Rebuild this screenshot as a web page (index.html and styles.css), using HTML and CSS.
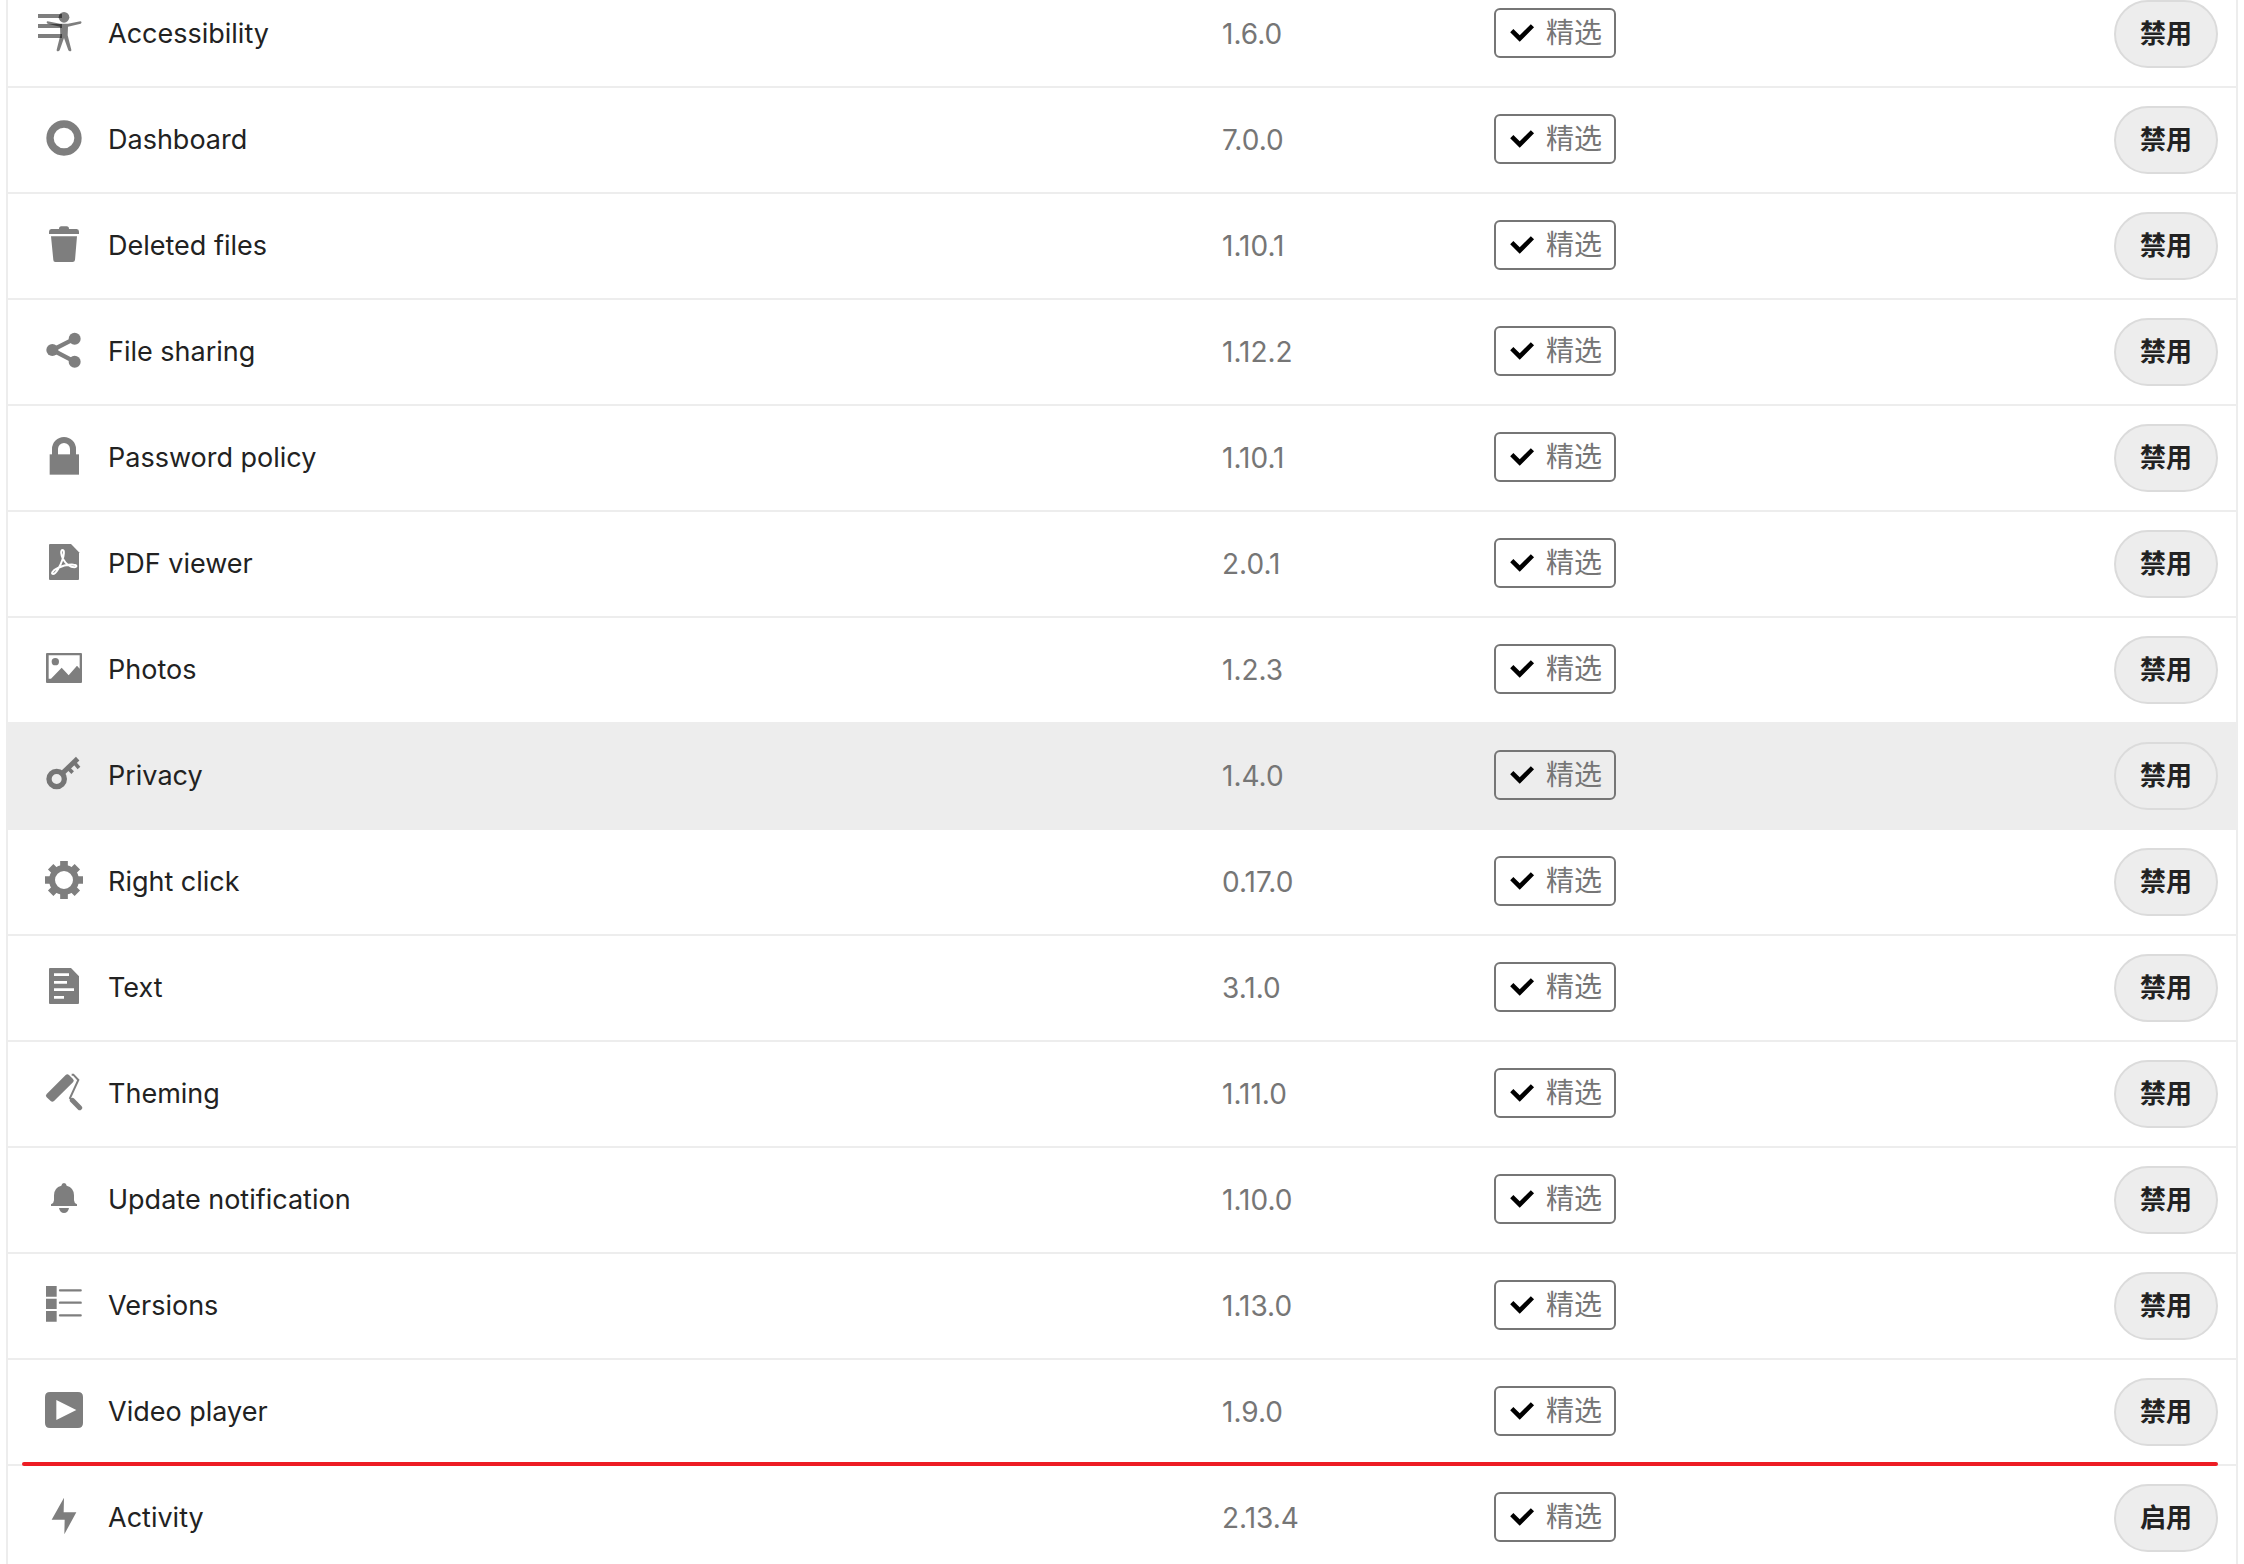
FILE: index.html
```html
<!DOCTYPE html>
<html lang="zh-CN">
<head>
  <meta charset="UTF-8">
  <meta name="viewport" content="width=device-width, initial-scale=1.0">
  <title>应用</title>
  <link rel="stylesheet" href="styles.css">
</head>
<body>
  <svg class="sprite" aria-hidden="true">
    <symbol id="check" viewBox="0 0 16 16">
      <path d="M11.924 4.066l-4.932 4.97-2.828-2.83L2.75 7.618l4.242 4.243 6.365-6.365z"/>
    </symbol>
  </svg>

  <button class="nav-toggle" type="button" aria-label="菜单">
    <svg viewBox="0 0 24 24"><path d="M0 0h24v4H0zM0 10h24v4H0zM0 20h24v4H0z"/></svg>
  </button>

  <main class="app-list">
    <table class="apps">
      <colgroup>
        <col class="col-icon">
        <col class="col-name">
        <col class="col-version">
        <col class="col-level">
        <col class="col-actions">
      </colgroup>
      <tbody>
        <tr>
          <td class="app-icon">
            <svg viewBox="0 0 120 120">
              <circle cx="60" cy="16" r="16"/>
              <path d="M11 28C7 28 7 34 11 35L48 44L49 70L38 113C37 118 44 120 47 115L60 78L73 115C76 120 83 118 82 113L71 70L72 44L110 35C114 34 113 28 109 28L72 35H48Z"/>
            </svg>
          </td>
          <td class="app-name">Accessibility</td>
          <td class="app-version">1.6.0</td>
          <td><span class="badge"><svg><use href="#check"/></svg>精选</span></td>
          <td class="actions"><button type="button">禁用</button></td>
        </tr>
        <tr>
          <td class="app-icon">
            <svg viewBox="0 0 120 120"><circle class="line" cx="60" cy="60" r="42" stroke-width="22"/></svg>
          </td>
          <td class="app-name">Dashboard</td>
          <td class="app-version">7.0.0</td>
          <td><span class="badge"><svg><use href="#check"/></svg>精选</span></td>
          <td class="actions"><button type="button">禁用</button></td>
        </tr>
        <tr>
          <td class="app-icon">
            <svg viewBox="0 0 120 120">
              <path d="M45 15Q45 7 52 7H68Q75 7 75 15H98Q105 16 105 23V30H15V23Q15 16 22 15Z"/>
              <path d="M21 37H99L93 108Q92 114 86 114H34Q28 114 28 108Z"/>
            </svg>
          </td>
          <td class="app-name">Deleted files</td>
          <td class="app-version">1.10.1</td>
          <td><span class="badge"><svg><use href="#check"/></svg>精选</span></td>
          <td class="actions"><button type="button">禁用</button></td>
        </tr>
        <tr>
          <td class="app-icon">
            <svg viewBox="0 0 120 120">
              <circle cx="25" cy="60" r="18"/>
              <circle cx="92" cy="26" r="18"/>
              <circle cx="92" cy="95" r="18"/>
              <path class="line" d="M92 26L25 60L92 95" stroke-width="13"/>
            </svg>
          </td>
          <td class="app-name">File sharing</td>
          <td class="app-version">1.12.2</td>
          <td><span class="badge"><svg><use href="#check"/></svg>精选</span></td>
          <td class="actions"><button type="button">禁用</button></td>
        </tr>
        <tr>
          <td class="app-icon">
            <svg viewBox="0 0 120 120">
              <path d="M17 55H105V116H17Z"/>
              <path class="line" d="M33 58V39A27 27 0 0 1 87 39V58" stroke-width="18"/>
            </svg>
          </td>
          <td class="app-name">Password policy</td>
          <td class="app-version">1.10.1</td>
          <td><span class="badge"><svg><use href="#check"/></svg>精选</span></td>
          <td class="actions"><button type="button">禁用</button></td>
        </tr>
        <tr>
          <td class="app-icon">
            <svg viewBox="0 0 120 120">
              <path d="M18 6H81L105 31V111Q105 114 102 114H18Q15 114 15 111V9Q15 6 18 6Z"/>
              <path class="cutout-line" d="M56 24C49 24 51 38 57 51C65 65 79 76 91 76C100 75 99 68 89 68C73 67 53 72 39 79C26 85 20 96 27 96C36 96 49 72 55 54C60 40 62 24 56 24Z"/>
            </svg>
          </td>
          <td class="app-name">PDF viewer</td>
          <td class="app-version">2.0.1</td>
          <td><span class="badge"><svg><use href="#check"/></svg>精选</span></td>
          <td class="actions"><button type="button">禁用</button></td>
        </tr>
        <tr>
          <td class="app-icon">
            <svg viewBox="0 0 120 120">
              <path fill-rule="evenodd" d="M9 15H111Q114 15 114 18V102Q114 105 111 105H9Q6 105 6 102V18Q6 15 9 15ZM14 22V92H21L53 59L74 82L99 53L107 62V22Z"/>
              <circle cx="34" cy="41" r="11"/>
            </svg>
          </td>
          <td class="app-name">Photos</td>
          <td class="app-version">1.2.3</td>
          <td><span class="badge"><svg><use href="#check"/></svg>精选</span></td>
          <td class="actions"><button type="button">禁用</button></td>
        </tr>
        <tr class="active">
          <td class="app-icon">
            <svg viewBox="0 0 120 120">
              <circle class="line" cx="38" cy="75" r="23" stroke-width="16"/>
              <path class="line" d="M54 59L101 14" stroke-width="15"/>
              <path class="line" d="M91 26L105 42M72 42L86 56" stroke-width="11"/>
            </svg>
          </td>
          <td class="app-name">Privacy</td>
          <td class="app-version">1.4.0</td>
          <td><span class="badge"><svg><use href="#check"/></svg>精选</span></td>
          <td class="actions"><button type="button">禁用</button></td>
        </tr>
        <tr>
          <td class="app-icon">
            <svg viewBox="0 0 120 120">
              <circle class="line" cx="60" cy="60" r="36" stroke-width="18"/>
              <path class="line" d="M60 3V24M60 96V117M3 60H24M96 60H117M20 20L35 35M85 85L100 100M20 100L35 85M85 35L100 20" stroke-width="23"/>
            </svg>
          </td>
          <td class="app-name">Right click</td>
          <td class="app-version">0.17.0</td>
          <td><span class="badge"><svg><use href="#check"/></svg>精选</span></td>
          <td class="actions"><button type="button">禁用</button></td>
        </tr>
        <tr>
          <td class="app-icon">
            <svg viewBox="0 0 120 120">
              <path fill-rule="evenodd" d="M18 6H81L105 31V111Q105 114 102 114H18Q15 114 15 111V9Q15 6 18 6ZM30 22V30H75V22ZM30 45V53H69V45ZM30 67V75H90V67ZM30 90V98H60V90Z"/>
            </svg>
          </td>
          <td class="app-name">Text</td>
          <td class="app-version">3.1.0</td>
          <td><span class="badge"><svg><use href="#check"/></svg>精选</span></td>
          <td class="actions"><button type="button">禁用</button></td>
        </tr>
        <tr>
          <td class="app-icon">
            <svg viewBox="0 0 120 120">
              <path d="M65 9Q70 4 75 9L87 21Q92 26 87 31L30 87Q25 92 20 87L8 76Q3 71 8 66Z"/>
              <path class="line" d="M83 8L88 8L103 24L78 78L84 85" stroke-width="6"/>
              <path class="line round" d="M85 85L107 107" stroke-width="15"/>
            </svg>
          </td>
          <td class="app-name">Theming</td>
          <td class="app-version">1.11.0</td>
          <td><span class="badge"><svg><use href="#check"/></svg>精选</span></td>
          <td class="actions"><button type="button">禁用</button></td>
        </tr>
        <tr>
          <td class="app-icon">
            <svg viewBox="0 0 120 120">
              <path d="M60 15Q67 15 68 23Q90 29 90 52V67Q90 75 99 79V84H21V79Q30 75 30 67V52Q30 29 52 23Q53 15 60 15Z"/>
              <path d="M45 90H75Q72 105 60 105Q48 105 45 90Z"/>
            </svg>
          </td>
          <td class="app-name">Update notification</td>
          <td class="app-version">1.10.0</td>
          <td><span class="badge"><svg><use href="#check"/></svg>精选</span></td>
          <td class="actions"><button type="button">禁用</button></td>
        </tr>
        <tr>
          <td class="app-icon">
            <svg viewBox="0 0 120 120">
              <path d="M6 6H38V38H6ZM6 44H38V75H6ZM6 81H38V113H6Z"/>
              <path class="line round" d="M48 19H110M48 56H110M48 94H110" stroke-width="7"/>
            </svg>
          </td>
          <td class="app-name">Versions</td>
          <td class="app-version">1.13.0</td>
          <td><span class="badge"><svg><use href="#check"/></svg>精选</span></td>
          <td class="actions"><button type="button">禁用</button></td>
        </tr>
        <tr>
          <td class="app-icon">
            <svg viewBox="0 0 120 120">
              <path fill-rule="evenodd" d="M18 6H102Q117 6 117 21V99Q117 114 102 114H18Q3 114 3 99V21Q3 6 18 6ZM37 30V90L97 60Z"/>
            </svg>
          </td>
          <td class="app-name">Video player</td>
          <td class="app-version">1.9.0</td>
          <td><span class="badge"><svg><use href="#check"/></svg>精选</span></td>
          <td class="actions"><button type="button">禁用</button></td>
        </tr>
        <tr class="first-disabled">
          <td class="app-icon">
            <svg viewBox="0 0 120 120"><path d="M60 5L23 71H62L61 115L97 49H59Z"/></svg>
          </td>
          <td class="app-name">Activity</td>
          <td class="app-version">2.13.4</td>
          <td><span class="badge"><svg><use href="#check"/></svg>精选</span></td>
          <td class="actions"><button type="button">启用</button></td>
        </tr>
      </tbody>
    </table>
  </main>
</body>
</html>
```
FILE: styles.css
```css
* {
  box-sizing: border-box;
}

body {
  margin: 0;
  background: #fff;
  color: #222;
  font-family: Inter, "Noto Sans CJK SC", sans-serif;
  font-size: 28px;
  line-height: 36px;
}

.sprite {
  display: none;
}

.app-list {
  height: 100vh;
  padding: 0 6px;
  overflow: hidden;
}

.apps {
  width: 100%;
  table-layout: fixed;
  border-collapse: separate;
  border-spacing: 0;
  border: 2px solid #ededed;
  border-width: 0 2px;
}

.col-icon {
  width: 100px;
}

.col-name {
  width: 50%;
}

.col-version {
  width: 272px;
}

.col-level {
  width: 24%;
}

.apps td {
  padding: 18px 0;
  border-bottom: 2px solid #ededed;
  vertical-align: middle;
}

.apps tr:first-child td {
  padding-top: 0;
}

.apps .active td {
  background: #ededed;
}

.apps .app-icon {
  padding-left: 36px;
}

.app-icon svg {
  display: block;
  width: 40px;
  height: 40px;
  margin-bottom: 4px;
  opacity: 0.5;
}

.line {
  fill: none;
  stroke: #000;
}

.round {
  stroke-linecap: round;
}

.cutout-line {
  fill: none;
  stroke: #fff;
  stroke-width: 6;
}

.app-name {
  font-size: 27px;
}

.app-version {
  color: #767676;
}

.badge {
  display: flex;
  align-items: center;
  gap: 6px;
  width: max-content;
  height: 50px;
  margin-bottom: 2px;
  padding: 0 12px 0 8px;
  border: 2px solid #767676;
  border-radius: 6px;
  color: #767676;
}

.badge svg {
  width: 36px;
  height: 36px;
}

.apps .actions {
  padding-right: 18px;
  text-align: right;
}

.actions button {
  display: block;
  height: 68px;
  margin-left: auto;
  padding: 0 24px;
  border: 2px solid #dbdbdb;
  border-radius: 34px;
  background: #ededed;
  color: #222;
  font: bold 26px/36px Inter, "Noto Sans CJK SC", sans-serif;
  white-space: nowrap;
  cursor: pointer;
}

.nav-toggle {
  position: absolute;
  top: 14px;
  left: 38px;
  z-index: 1;
  padding: 0;
  border: 0;
  background: none;
  opacity: 0.5;
  cursor: pointer;
}

.nav-toggle svg {
  display: block;
  width: 24px;
  height: 24px;
}

/* red rule between enabled and disabled apps */
.first-disabled {
  position: relative;
}

.first-disabled .app-icon::before {
  content: "";
  position: absolute;
  top: -4px;
  left: 14px;
  right: 18px;
  height: 4px;
  border-radius: 2px;
  background: #ed1c24;
}
```
